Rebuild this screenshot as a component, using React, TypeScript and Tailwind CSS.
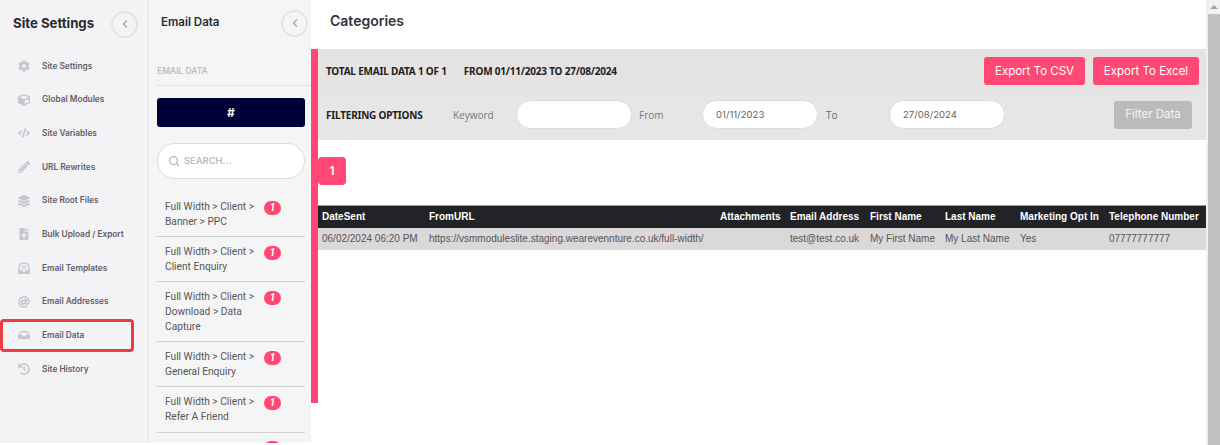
import React from 'react';
import { FaAt, FaCode, FaCog, FaCube, FaEnvelopeOpenText, FaFileMedical, FaHistory, FaInbox, FaLayerGroup, FaPencilAlt } from 'react-icons/fa';
import { LuChevronLeft, LuSearch } from 'react-icons/lu';

const siteLinks = [
  { label: 'Site Settings', icon: FaCog },
  { label: 'Global Modules', icon: FaCube },
  { label: 'Site Variables', icon: FaCode },
  { label: 'URL Rewrites', icon: FaPencilAlt },
  { label: 'Site Root Files', icon: FaLayerGroup },
  { label: 'Bulk Upload / Export', icon: FaFileMedical },
  { label: 'Email Templates', icon: FaEnvelopeOpenText },
  { label: 'Email Addresses', icon: FaAt },
  { label: 'Email Data', icon: FaInbox, active: true },
  { label: 'Site History', icon: FaHistory },
];

const categories = [
  ['Full Width > Client >', 'Banner > PPC'],
  ['Full Width > Client >', 'Client Enquiry'],
  ['Full Width > Client >', 'Download > Data', 'Capture'],
  ['Full Width > Client >', 'General Enquiry'],
  ['Full Width > Client >', 'Refer A Friend'],
];

const inter = "font-['Inter',sans-serif]";
const openSans = "font-['Open_Sans',sans-serif]";
const noto = "font-['Noto_Sans',sans-serif]";

const CollapseButton = () => (
  <button className="flex h-[27px] w-[27px] items-center justify-center rounded-full border-2 border-[#e3e3e3] text-[#a8a8b2]">
    <LuChevronLeft size={12} strokeWidth={3} />
  </button>
);

const Badge = () => (
  <span className="flex h-[14px] w-[17px] shrink-0 items-center justify-center rounded-full bg-[#ff4874] text-[10px] font-bold italic text-white">
    1
  </span>
);

const DateField = ({ value }: { value: string }) => (
  <div className={`flex h-[29px] w-[116px] items-center rounded-full border border-[#dcdcdc] bg-white pl-[13px] pt-[2px] text-[9.6px] text-[#666] ${inter}`}>
    {value}
  </div>
);

const App: React.FC = () => {
  return (
    <div className={`flex h-[445px] w-[1220px] overflow-hidden bg-white ${inter}`}>
      <aside className="h-[443px] w-[149px] shrink-0 border-r border-[#e6e6ea] bg-[#f3f3f6]">
        <div className="flex h-[48px] items-center justify-between pl-[13px] pr-[10px]">
          <h1 className="text-[13.2px] font-bold text-[#2a2a33]">Site Settings</h1>
          <CollapseButton />
        </div>
        <nav className="pt-[1px]">
          {siteLinks.map(({ label, icon: Icon, active }) => (
            <div key={label} className="relative flex h-[33.7px] items-center text-[8.3px] font-semibold text-[#5f6068]">
              <span className="flex w-[42px] justify-center pl-[6px] text-[#c6c6cd]">
                <Icon size={12} />
              </span>
              {label}
              {active && (
                <span className="absolute left-0 top-0 h-[33px] w-[134px] rounded-[4px] border-[3px] border-[#ee3b3f]" />
              )}
            </div>
          ))}
        </nav>
      </aside>

      <section className="h-[443px] w-[162px] shrink-0 overflow-hidden bg-[#f5f5f5]">
        <div className="flex h-[46px] items-center justify-between pl-[12px] pr-[3px]">
          <h2 className="text-[11.5px] font-semibold text-[#2a2a33]">Email Data</h2>
          <CollapseButton />
        </div>
        <div className="pl-[8px]">
          <div className="flex h-[40px] items-end border-b border-[#e2e2e2] pb-[7px] text-[8.5px] font-semibold text-[#bdbdbd]">EMAIL DATA</div>
          <div className="pr-[6px]">
            <button className="mt-[12px] flex h-[29px] w-full items-center justify-center rounded-[3px] bg-[#000038] text-[12px] font-bold text-white">#</button>
            <div className="mt-[16px] flex h-[36px] items-center gap-[4px] rounded-full border border-[#dddddd] bg-white pl-[10px] text-[9.4px] font-semibold text-[#bdbdbd]">
              <LuSearch size={12} strokeWidth={2.5} className="text-[#b5b5b5]" />
              SEARCH...
            </div>
            <ul className="mt-[13px] font-['Roboto',sans-serif] text-[10.2px] leading-[14.6px] text-[#555]">
              {categories.map(lines => (
                <li key={lines.join()} className="flex items-start justify-between border-b border-[#d0d0d0] pb-[7px] pl-[8px] pr-[24px] pt-[8px]">
                  <div>
                    {lines.map(line => (
                      <div key={line}>{line}</div>
                    ))}
                  </div>
                  <span className="mt-[1px]">
                    <Badge />
                  </span>
                </li>
              ))}
              <li className="flex justify-end pr-[24px] pt-[8px]">
                <span className="h-[14px] w-[17px] rounded-full bg-[#ff4874]" />
              </li>
            </ul>
          </div>
        </div>
      </section>

      <main className="flex min-w-0 flex-1 flex-col">
        <div className="flex h-[49px] shrink-0 items-start pl-[19px] pt-[12px] text-[14px] font-semibold leading-[17px] text-[#33333b]">Categories</div>
        <div className="h-[354px] border-l-[7px] border-[#ff4874]">
          <div className="flex h-[43px] items-center justify-between bg-[#e5e3e4] pl-[8px] pr-[7px]">
            <div className={`flex gap-[17px] pt-[2px] text-[10px] font-bold tracking-[-0.2px] text-[#222] ${noto}`}>
              <span>TOTAL EMAIL DATA 1 OF 1</span>
              <span>FROM 01/11/2023 TO 27/08/2024</span>
            </div>
            <div className="flex gap-[8px] text-[11.5px] text-white">
              <button className="h-[28px] w-[101px] rounded-[3px] bg-[#ff4874] pt-[2px]">Export To CSV</button>
              <button className="h-[28px] w-[106px] rounded-[3px] bg-[#ff4874] pt-[2px]">Export To Excel</button>
            </div>
          </div>
          <div className={`flex h-[48px] items-center bg-[#e6e6e6] pb-[3px] pl-[8px] pr-[14px] text-[10px] text-[#777] ${openSans}`}>
            <span className={`mt-[2px] w-[127px] text-[10px] font-bold tracking-[-0.2px] text-[#222] ${noto}`}>FILTERING OPTIONS</span>
            <span className="mt-[2px] w-[63px]">Keyword</span>
            <div className="h-[29px] w-[116px] rounded-full border border-[#dcdcdc] bg-white" />
            <span className="mt-[2px] w-[70px] pl-[7px]">From</span>
            <DateField value="01/11/2023" />
            <span className="mt-[2px] w-[71px] pl-[8px] text-[#666]">To</span>
            <DateField value="27/08/2024" />
            <button className={`ml-auto h-[28px] w-[78px] rounded-[3px] bg-[#bbbbbb] text-[11.5px] text-[#f4f4f4] ${inter}`}>Filter Data</button>
          </div>
          <div className="pt-[17px]">
            <button className="flex h-[28px] w-[28px] items-center justify-center rounded-[4px] bg-[#ff4874] text-[12px] font-semibold text-white">1</button>
          </div>
          <table className="mt-[20px] w-full table-fixed whitespace-nowrap border-t border-[#999] font-['Liberation_Sans',sans-serif] text-[10px]">
            <thead className="bg-[#212327] text-left text-white">
              <tr className="h-[22px]">
                <th className="w-[107px] pl-[4px] font-bold">DateSent</th>
                <th className="w-[291px] pl-[4px] font-bold">FromURL</th>
                <th className="w-[70px] pl-[4px] font-bold">Attachments</th>
                <th className="w-[80px] pl-[4px] font-bold">Email Address</th>
                <th className="w-[75px] pl-[4px] font-bold">First Name</th>
                <th className="w-[75px] pl-[4px] font-bold">Last Name</th>
                <th className="w-[89px] pl-[4px] font-bold">Marketing Opt In</th>
                <th className="pl-[4px] font-bold">Telephone Number</th>
              </tr>
            </thead>
            <tbody className="bg-[#dad8d9] text-[#555]">
              <tr className="h-[22px]">
                <td className="pl-[4px]">06/02/2024 06:20 PM</td>
                <td className="pl-[4px]">https://vsmmoduleslite.staging.wearevennture.co.uk/full-width/</td>
                <td className="pl-[4px]"></td>
                <td className="pl-[4px]">test@test.co.uk</td>
                <td className="pl-[4px]">My First Name</td>
                <td className="pl-[4px]">My Last Name</td>
                <td className="pl-[4px]">Yes</td>
                <td className="pl-[4px]">07777777777</td>
              </tr>
            </tbody>
          </table>
        </div>
      </main>

      <div className="flex w-[14px] shrink-0 flex-col bg-[#f1f1f1] pl-[2px]">
        <div className="flex h-[14px] items-center justify-center">
          <span className="h-0 w-0 border-x-[4px] border-b-[4px] border-x-transparent border-b-[#a3a3a3]" />
        </div>
        <div className="flex-1 bg-[#c1c1c1]" />
      </div>
    </div>
  );
};

export default App;
